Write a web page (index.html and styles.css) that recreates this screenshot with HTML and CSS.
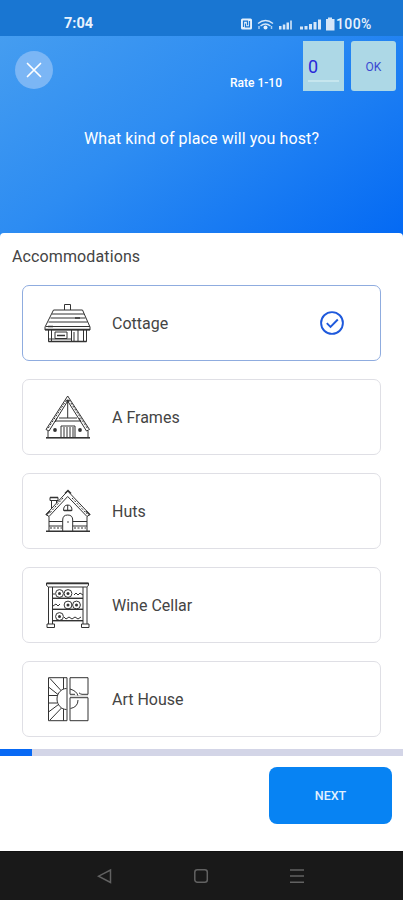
FILE: index.html
```
<!DOCTYPE html>
<html lang="en">
<head>
<meta charset="utf-8">
<title>Host a place</title>
<link rel="stylesheet" href="styles.css">
</head>
<body>
<div class="screen">
  <div class="status">
    <span class="time">7:04</span>
    <svg class="signals" width="96" height="16" viewBox="0 0 96 16">
      <rect x="1" y="2.5" width="11" height="11" rx="1.5" fill="#e4f0fc"/>
      <path d="M3.5 11V5.2h4v4M9.5 5v5.8h-4V7.5" fill="none" stroke="#1976d2" stroke-width="1.2"/>
      <g fill="none" stroke="#d5e6f8" stroke-width="1.5"><path d="M18 7.5q7.500-6 15 0M20.500 10q5-4 10 0"/></g>
      <circle cx="25.500" cy="11.500" r="2" fill="#e4f0fc"/>
      <path d="M19 10v3M31.500 10v3" stroke="#a9cdf2" stroke-width="1.500"/>
      <g fill="#d5e6f8"><rect x="39" y="10" width="2.500" height="3.500"/><rect x="42.800" y="8.500" width="2.500" height="5"/><rect x="46.500" y="6.500" width="2.500" height="7"/><rect x="50" y="4.500" width="2" height="9" opacity=".8"/>
      <rect x="60" y="10.500" width="3" height="3"/><rect x="64.500" y="10" width="3" height="3.500"/><rect x="69" y="8" width="3" height="5.500"/><rect x="73.500" y="6" width="3" height="7.500"/><rect x="78" y="3.500" width="3" height="10"/>
      <path d="M88 1.500h4V3h2.500v11.500H86V3h2z"/></g>
    </svg>
    <span class="battery">100%</span>
  </div>
  <header class="hero">
    <div class="tools">
      <button class="close" aria-label="Close"><svg width="38" height="38" viewBox="0 0 38 38"><path d="M12.500 12.500l13 13M25.500 12.500l-13 13" stroke="#fff" stroke-width="1.700" stroke-linecap="round"/></svg></button>
      <span class="rate">Rate 1-10</span>
      <div class="score"><span>0</span></div>
      <button class="ok">OK</button>
    </div>
    <h1>What kind of place will you host?</h1>
  </header>
  <main>
    <h2>Accommodations</h2>
    <div class="cards">
      <div class="card selected">
        <svg class="pic" viewBox="0 0 48 48">
          <path d="M20.500 11V5.500h6V11M9.500 11h29L46 28v3H1v-3zM8 15h32M6.500 19h35M4.500 23h39M2 27.500h44M4.500 31v11.500h38V31M7.500 31v11M39.500 31v11M11 33h12v6.500H11zM27.500 31v11.500M34 31v11.500M30 33v9M4 40h23"/>
          <path d="M1 30.500h45M13 36.500h8M31 19h5M4 27.500h5M4.500 42.500h38" stroke-width="1.500"/>
        </svg>
        <span class="name">Cottage</span>
        <svg class="check" width="26" height="26" viewBox="0 0 26 26"><circle cx="13" cy="13" r="10.900"/><path d="M7.800 13.200l3.700 3.700 7.300-7.400"/></svg>
      </div>
      <div class="card">
        <svg class="pic" viewBox="0 0 48 48">
          <path d="M23.700 3L2 36.500l3 1.500L23.700 8 42.500 38l3-1.500zM23.700 9v16M15 25h18M11 28h26M13 25l-2 4M35 25l2 4M4 38v6.500M44 38v6.500M17 44.500V33h14v11.500M20 34v10M23 34v10M26 34v10M29 34v10M2 44.700h44"/>
          <path class="grain" d="M22.500 7L4 35.500M25 7l18.500 28.500"/>
          <path d="M2 44.700h44" stroke-width="1.500"/><circle class="dot" cx="11" cy="37" r="1.900"/><circle class="dot" cx="36" cy="37" r="1.900"/><circle class="dot" cx="23.700" cy="8" r="1.400"/>
        </svg>
        <span class="name">A Frames</span>
      </div>
      <div class="card">
        <svg class="pic" viewBox="0 0 48 48">
          <path d="M23.700 4L2 27.500l3 2L23.700 9.500 43 29.500l3-2zM6 10.500h8v3H6zM7.500 13.500v8M12.500 13.500V16M5 29.500V44M43 29.500V44M18.700 44V33q0-5 5-5t5 5v11M5 34.500h13.700M28.700 34.500H43M5 39h13.700M28.700 39H43M19.500 23.500q0-5.500 4.200-5.500t4.300 5.500z"/>
          <path d="M2 44.200h44M6 10.500h8M20 23.500h7.500M21 6.500l3-3 3 3M2 28l4-4M46 28l-4-4" stroke-width="1.500"/>
          <path class="grain" d="M19 11L5 27M28 11l15 16M6 41h12M30 41h12"/><path d="M23.700 18v5"/><circle class="dot" cx="24" cy="35" r=".8"/>
        </svg>
        <span class="name">Huts</span>
      </div>
      <div class="card">
        <svg class="pic" viewBox="0 0 48 48">
          <path d="M2.500 2h42v2.500l-2 1.500h-38l-2-1.500zM4.500 6v37M8.500 6v37M39 6v37M43 6v37M3 43h7.500v3.500H3zM37.500 43H45v3.500h-7.500zM9 17.300h30M9 28.300h30M9 39.700h30M9 13h2M30 14l2-2 2 2 2-2 3 2M9 25l3-2 2 2 2-2M20 36l2 2 3-2 3 2 3-2 3 2 3-2"/>
          <path d="M2.500 2.500h42M9 17.300h30M9 28.300h30M9 39.700h30" stroke-width="1.300"/>
          <g><circle cx="15.500" cy="12.500" r="3.900"/><circle cx="24" cy="12.500" r="3.900"/><circle cx="24" cy="24" r="3.900"/><circle cx="32.500" cy="24" r="3.900"/><circle cx="15.500" cy="35.500" r="3.900"/></g>
          <g class="dot"><circle cx="15.500" cy="12.500" r="1.500"/><circle cx="24" cy="12.500" r="1.500"/><circle cx="24" cy="24" r="1.500"/><circle cx="32.500" cy="24" r="1.500"/><circle cx="15.500" cy="35.500" r="1.500"/></g>
        </svg>
        <span class="name">Wine Cellar</span>
      </div>
      <div class="card">
        <svg class="pic" viewBox="0 0 48 48">
          <path d="M4.500 2.700h18.500v43H4.500zM19.500 2.700V14M19.500 34v11.700M26 2.700h18v16.600h-6q-2-.3-3-1.500M26 2.700v16.600h5M26 22.700h18v23H26zM22.500 13.500c-5 0-9.500 4.500-9.500 10.500s4.500 10.500 9.500 10.500M26 14q7 2 8 7M34 25q0 7-7.500 8.500M6 3.500l11 12M4.500 12l9.500 7.500M4.500 20.500H13M4.500 28H13M4.500 37l10-7.500M6 45l11.500-12"/>
          <path d="M26 21h18" stroke="#bbb"/>
        </svg>
        <span class="name">Art House</span>
      </div>
    </div>
  </main>
  <div class="progress"><div class="bar"></div></div>
  <footer><button class="next">NEXT</button></footer>
  <nav>
    <svg width="16" height="18" viewBox="0 0 16 18"><path d="M13.500 3v12.500L1.500 9.200z"/></svg>
    <svg width="16" height="18" viewBox="0 0 16 18"><rect x="1.800" y="2.800" width="12.500" height="12.500" rx="2.500"/></svg>
    <svg width="16" height="18" viewBox="0 0 16 18"><path d="M1 3h14M1 9h14M1 15.200h14"/></svg>
  </nav>
</div>
</body>
</html>
```
FILE: styles.css
```
* { box-sizing: border-box; }
body { margin: 0; background: #fff; font-family: Roboto, "Liberation Sans", sans-serif; }
button { border: 0; padding: 0; font: inherit; }
h1, h2 { margin: 0; font-weight: 400; }
.screen { width: 403px; height: 900px; display: flex; flex-direction: column; overflow: hidden; }
.status { height: 36px; background: #1976d2; color: #e8f2fd; display: flex; align-items: center; padding: 12px 0 0 64px; line-height: 24px; }
.time { width: 176px; font-size: 14.500px; font-weight: 700; }
.battery { font-size: 14px; font-weight: 500; letter-spacing: .4px; }
.hero { height: 204px; margin-bottom: -7px; background: linear-gradient(145deg, #459df0 0%, #2d8cf2 42%, #0369f4 100%); color: #fff; }
.tools { display: flex; height: 56px; padding: 5px 7px 0 15px; align-items: flex-start; }
.close { width: 38px; height: 38px; border-radius: 50%; background: #7bb6f5; margin-top: 10px; }
.close svg { display: block; }
.rate { width: 73px; margin: 33px 0 0 177px; font-size: 12px; font-weight: 500; line-height: 18px; white-space: nowrap; }
.score { width: 41px; height: 50px; background: #add8e6; padding: 16px 5px 0; color: #2929d9; font-size: 18px; line-height: 20px; }
.score span { display: block; height: 25px; border-bottom: 2px solid #c6e6ee; }
.ok { width: 45px; height: 50px; margin-left: 7px; border-radius: 3px; background: #add8e6; color: #3a48d2; font-size: 12px; padding-top: 2px; }
h1 { margin-top: 35px; text-align: center; font-size: 16px; line-height: 24px; letter-spacing: .1px; }
main { height: 516px; background: #fff; border-radius: 4px 4px 0 0; padding: 12px 22px 0; }
h2 { margin-left: -10px; font-size: 16px; line-height: 24px; letter-spacing: .12px; color: #444; }
.cards { display: grid; gap: 18px; margin-top: 16px; }
.card { height: 76px; border: 1.500px solid #dfdfe5; border-radius: 7px; display: flex; align-items: center; padding: 0 35px 0 21px; }
.selected { border-color: #8facdf; }
.pic { width: 48px; height: 48px; fill: none; stroke: #333; stroke-width: 1; }
.pic .dot { fill: #333; stroke: none; }
.grain { stroke-dasharray: 2 1.500; }
.name { margin-left: 20px; flex: 1; font-size: 16px; letter-spacing: 0; color: #444; }
.check { fill: none; stroke: #1e59dc; stroke-width: 1.900; }
.progress { height: 7px; background: #d3d5e7; }
.bar { width: 32px; height: 7px; background: #0869f4; }
footer { height: 95px; padding: 11px 11px 0; display: flex; justify-content: flex-end; align-items: flex-start; }
.next { width: 123px; height: 57px; border-radius: 8px; background: #0783f3; color: #e0f0ff; font-size: 12.500px; font-weight: 500; }
nav { height: 49px; background: #191919; border-top: 1px solid #111; display: flex; justify-content: center; align-items: center; gap: 80px; padding-right: 2px; }
nav svg { fill: none; stroke: #626262; stroke-width: 1.500; }
```
